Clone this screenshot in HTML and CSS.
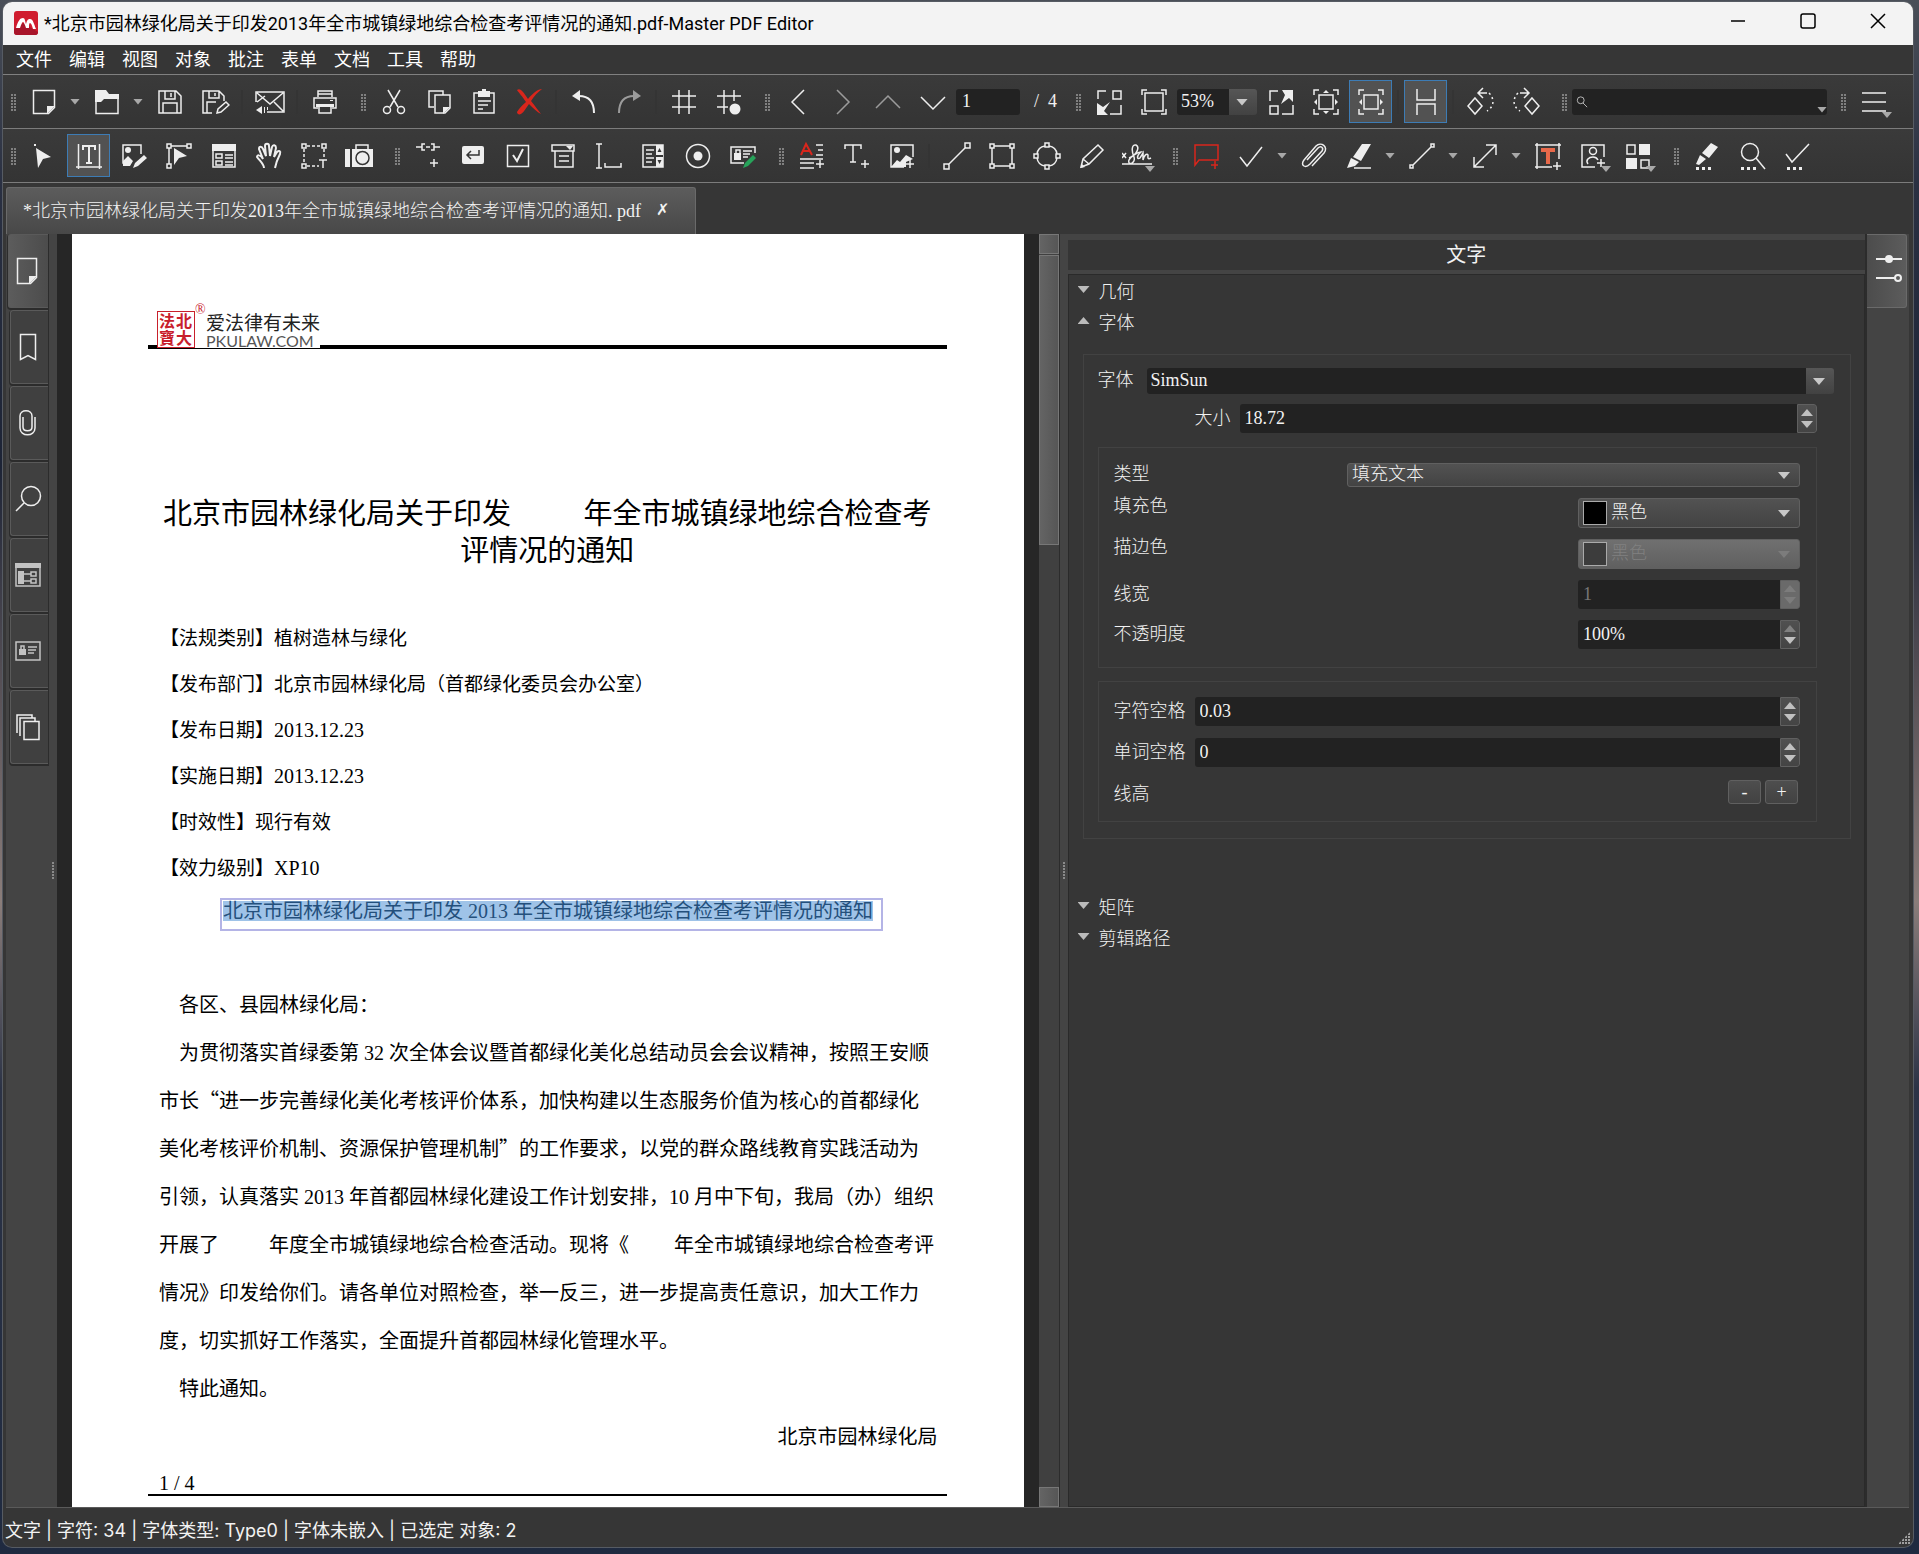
FILE: index.html
```html
<!DOCTYPE html>
<html lang="zh-CN">
<head>
  <meta charset="UTF-8" />
  <meta name="viewport" content="width=device-width, initial-scale=1.0" />
  <title>Master PDF Editor</title>
  <link rel="stylesheet" href="styles.css">
</head>
<body>
  <div class="window">
    <header class="titlebar">
      <svg class="app-logo" viewBox="0 0 24 24"><rect width="24" height="24" rx="3" fill="#d01c2e"/><path d="M0 18l9-6 15 9v1a3 3 0 0 1-3 2H3a3 3 0 0 1-3-3z" fill="#a8152a"/><path d="M2 17C4 10 6 7 9 7c2 0 2 3 3 6 1-4 2-5 4-5 3 0 4 5 6 10h-3c-1-4-2-6-3-6s-1 3-1 5h-3c-1-3-2-6-3-6s-2 3-3 6z" fill="#fff"/></svg>
      <span class="caption">*北京市园林绿化局关于印发2013年全市城镇绿地综合检查考评情况的通知.pdf-Master PDF Editor</span>
      <div class="window-buttons">
        <button aria-label="最小化"><svg viewBox="0 0 16 16"><path d="M1 8h14"/></svg></button>
        <button aria-label="最大化"><svg viewBox="0 0 16 16"><rect x="1" y="1" width="14" height="14" rx="2"/></svg></button>
        <button aria-label="关闭"><svg viewBox="0 0 16 16"><path d="M1 1l14 14M15 1L1 15"/></svg></button>
      </div>
    </header>

    <nav class="menubar">
      <a href="#">文件</a>
      <a href="#">编辑</a>
      <a href="#">视图</a>
      <a href="#">对象</a>
      <a href="#">批注</a>
      <a href="#">表单</a>
      <a href="#">文档</a>
      <a href="#">工具</a>
      <a href="#">帮助</a>
    </nav>

    <div class="toolbar">
      <span class="grip"></span>
      <button class="tool" aria-label="新建"><svg viewBox="0 0 30 30"><path d="M4.5 3.5h21v17l-6 6h-15z"/><path class="f" d="M18 27v-8h8z"/></svg></button>
      <button class="drop" aria-label="新建选项"></button>
      <button class="tool" aria-label="打开"><svg viewBox="0 0 30 30"><path d="M4 8v18.500h22V8"/><path class="f" d="M3 3h11l3 4h10v5H12l-3 3H3z"/></svg></button>
      <button class="drop" aria-label="打开选项"></button>
      <button class="tool" aria-label="保存"><svg viewBox="0 0 30 30"><path d="M4 4h17l5 5v17H4zM8 26V16h14v10M10 4v8h10V4"/><path d="M16 6v4"/></svg></button>
      <button class="tool" aria-label="另存为"><svg viewBox="0 0 30 30"><path d="M12 26H3V4h16l5 5v5M7 26V15h9M9 4v7h10V4M15 6v3"/><path d="M17 26l1-4 8-7 3 3-8 7z"/></svg></button>
      <span class="sep"></span>
      <button class="tool" aria-label="邮件"><svg viewBox="0 0 30 30"><path d="M1 15V5h28v20H12M2 6l13 11L28 6M28 24l-9-9M2 15l8-6"/><path class="f" d="M1 23l6-4v8zM9 20h1v6h-1zM12 20h1v3h-1z"/></svg></button>
      <span class="sep"></span>
      <button class="tool" aria-label="打印"><svg viewBox="0 0 30 30"><path d="M8 10V4h14v6M8 7h14M8 21H4V11h22v10h-4M9 18h12v8H9z"/><path class="f" d="M6 17h18v3H6zM20 13h3v1h-3z"/></svg></button>
      <span class="grip"></span>
      <button class="tool" aria-label="剪切"><svg viewBox="0 0 30 30"><path d="M9 3l10 17M21 3L11 20"/><circle cx="8" cy="23" r="3.500"/><circle cx="22" cy="23" r="3.500"/></svg></button>
      <button class="tool" aria-label="复制"><svg viewBox="0 0 30 30"><path d="M10 20H5V4h14v4M11 8h15v13l-5 5H11z"/><path class="f" d="M19 27v-7h7z"/></svg></button>
      <button class="tool" aria-label="粘贴"><svg viewBox="0 0 30 30"><path d="M5 6h20v20H5zM9 14h13M9 18h10M9 22h5"/><path class="f" d="M9 4h4V2h4v2h4v6H9z"/></svg></button>
      <button class="tool" aria-label="删除"><svg viewBox="0 0 30 30"><path class="red-f" d="M3 3c3-2 5 0 11 9C19 6 24 2 28 2c-4 3-8 7-11 12 4 5 7 9 10 13-4-2-8-6-12-10-3 4-5 8-8 10-2 1-4 0-4-2 2-3 5-7 9-10C8 9 5 6 3 3z"/></svg></button>
      <span class="sep"></span>
      <button class="tool" aria-label="撤销"><svg viewBox="0 0 30 30"><path class="w2" d="M10 9c10 0 15 6 15 17"/><path class="f" d="M3 9l8-6v11z"/></svg></button>
      <button class="tool off" aria-label="重做"><svg viewBox="0 0 30 30"><path class="w2" d="M20 9C10 9 5 15 5 26"/><path class="f" d="M27 9l-8-6v11z"/></svg></button>
      <span class="sep"></span>
      <button class="tool" aria-label="网格"><svg viewBox="0 0 30 30"><path d="M10 3v24M20 3v24M3 9h24M3 20h24"/></svg></button>
      <button class="tool" aria-label="对齐网格"><svg viewBox="0 0 30 30"><path d="M10 3v24M20 3v11M3 9h24M3 20h11"/><circle class="f" cx="21" cy="22" r="5.500"/></svg></button>
      <span class="grip"></span>
      <button class="tool" aria-label="第一页"><svg viewBox="0 0 30 30"><path d="M21 3L9 15l12 12"/></svg></button>
      <button class="tool off" aria-label="最后一页"><svg viewBox="0 0 30 30"><path d="M9 3l12 12L9 27"/></svg></button>
      <button class="tool off" aria-label="上一页"><svg viewBox="0 0 30 30"><path d="M3 21L15 9l12 12"/></svg></button>
      <button class="tool" aria-label="下一页"><svg viewBox="0 0 30 30"><path d="M3 10l12 12 12-12"/></svg></button>
      <input class="page-number" type="text" value="1" aria-label="页码">
      <span class="page-total">/&nbsp; 4</span>
      <span class="grip"></span>
      <button class="tool" aria-label="缩小"><svg viewBox="0 0 30 30"><path d="M4 12V4h8M19 4h8v8h-8zM16 27h11v-9"/><path class="f" d="M3 16v12h11l-4-4 6-9-7 5z"/></svg></button>
      <button class="tool" aria-label="实际大小"><svg viewBox="0 0 30 30"><path d="M6 6h18v18H6zM3 8V3h5M22 3h5v5M27 22v5h-5M8 27H3v-5"/></svg></button>
      <span class="combo zoom-combo">
        <select aria-label="缩放"><option>53%</option></select>
      </span>
      <button class="tool" aria-label="放大"><svg viewBox="0 0 30 30"><path d="M12 4H4v10M4 19h8v8H4zM16 27h11V18"/><path class="f" d="M16 3h11v12l-4-4-8 6 4-9z"/></svg></button>
      <button class="tool" aria-label="适合页面"><svg viewBox="0 0 30 30"><path d="M8 8h14v14H8zM3 8V3h5M22 3h5v5M27 22v5h-5M8 27H3v-5"/><path class="f" d="M15 3l3 3h-6zM15 27l3-3h-6zM3 15l3-3v6zM27 15l-3-3v6z"/></svg></button>
      <button class="tool on" aria-label="适合宽度"><svg viewBox="0 0 30 30"><path d="M8 8h14v14H8zM3 8V3h5M22 3h5v5M27 22v5h-5M8 27H3v-5"/><path class="f" d="M3 15l3-3v6zM27 15l-3-3v6z"/></svg></button>
      <span class="sep"></span>
      <button class="tool on" aria-label="连续页面"><svg viewBox="0 0 30 30"><path d="M6 2v11h18V2M6 28V17h18v11"/></svg></button>
      <span class="sep"></span>
      <button class="tool" aria-label="向左旋转"><svg viewBox="0 0 30 30"><path d="M9 11l7 8-7 8-7-8zM12 6h9M17 1l-5 5 5 5"/><path class="dots" d="M23 6c6 6 5 14-2 18"/></svg></button>
      <button class="tool" aria-label="向右旋转"><svg viewBox="0 0 30 30"><path d="M21 11l7 8-7 8-7-8zM18 6H9M13 1l5 5-5 5"/><path class="dots" d="M7 6c-6 6-5 14 2 18"/></svg></button>
      <span class="grip"></span>
      <label class="search">
        <svg viewBox="0 0 14 14"><circle cx="5.500" cy="5" r="4"/><path d="M8 8l5 5"/></svg>
        <input type="text" aria-label="搜索">
      </label>
      <span class="grip"></span>
      <button class="tool more" aria-label="工具栏菜单"><svg viewBox="0 0 30 30"><path d="M3 6h24M3 15h24M3 24h24"/></svg></button>
    </div>

    <div class="toolbar">
      <span class="grip"></span>
      <button class="tool" aria-label="选择"><svg viewBox="0 0 30 30"><path class="f" d="M7 7l15 9-8 2-5 9zM5 3h2v2H5z"/></svg></button>
      <button class="tool on" aria-label="编辑文字"><svg viewBox="0 0 30 30"><path d="M4.500 3v25M25.500 3v25M2 26h26"/><path class="f" d="M8 4h14v5h-2V6h-4v15h2v2h-6v-2h2V6h-4v3H8z"/></svg></button>
      <button class="tool" aria-label="编辑图像"><svg viewBox="0 0 30 30"><path d="M10 22H4V4h18v9"/><circle class="f" cx="9" cy="9" r="3"/><path class="f" d="M4 20l5-5 5 5-3 5H4zM14 27l2-5 9-8 3 3-9 8z"/></svg></button>
      <button class="tool" aria-label="编辑路径"><svg viewBox="0 0 30 30"><path d="M5 7v16M7 5h16M3 3h4v4H3zM23 3h4v4h-4zM3 23h4v4H3z"/><path class="f" d="M10 7l13 8-8 2-5 7z"/></svg></button>
      <button class="tool" aria-label="编辑表单"><svg viewBox="0 0 30 30"><path d="M4 4h22v22H4zM7 13h6v4H7zM7 20h6v4H7zM16 14h8M16 17h8M16 21h8M16 24h8"/><path class="f" d="M3 3h24v7H3z"/></svg></button>
      <button class="tool" aria-label="手形工具"><svg viewBox="0 0 30 30"><path class="w2" d="M10 27c0-4-4-7-7-11 0-2 3-3 6 2L5 8c0-3 3-3 4 0l3 7-1-10c0-3 4-3 4 0l1 10 2-9c1-3 4-2 4 1l-2 9 3-5c2-2 4-1 3 2-2 4-4 9-5 14"/></svg></button>
      <button class="tool" aria-label="选择文本"><svg viewBox="0 0 30 30"><path d="M3 3h4v4H3zM23 3h4v4h-4zM3 23h4v4H3zM20 19h8M24 19v8"/><path stroke-dasharray="3 2" d="M8 5h14M5 8v14M25 8v9M8 25h12"/></svg></button>
      <button class="tool" aria-label="快照"><svg viewBox="0 0 30 30"><path d="M12 8V4h12v4"/><path class="f" d="M1 8h5v18H1zM8 8h21v18H8z"/><circle cx="18.500" cy="17" r="6.500" fill="#eee" stroke="#353535"/></svg></button>
      <span class="grip"></span>
      <button class="tool" aria-label="链接"><svg viewBox="0 0 30 30"><path d="M3 6h6M21 6h6M12 3H9v6h3M18 3h3v6h-3M13 6h4M17 22h8M21 18v8"/></svg></button>
      <button class="tool" aria-label="按钮"><svg viewBox="0 0 30 30"><rect class="f" x="4" y="5" width="22" height="18" rx="2"/><path stroke="#353535" d="M21 9v5H9M13 10l-4 4 4 4"/></svg></button>
      <button class="tool" aria-label="复选框"><svg viewBox="0 0 30 30"><path d="M4.500 4.500h21v21h-21z"/><path class="w2" d="M10 14l4 6 6-12"/></svg></button>
      <button class="tool" aria-label="组合框"><svg viewBox="0 0 30 30"><path d="M4 4h22v6H4zM7 10v16h18V10M11 15h10M11 20h10"/><path class="f" d="M18 5h7l-3 4z"/></svg></button>
      <button class="tool" aria-label="文本框"><svg viewBox="0 0 30 30"><path d="M3 3h6M6 3v24M3 27h6M12 22v4h16v-4"/></svg></button>
      <button class="tool" aria-label="列表框"><svg viewBox="0 0 30 30"><path d="M5 4h20v22H5zM8 9h8M8 13h6M8 17h8M8 21h6"/><path class="f" d="M18 4h7v22h-7z"/><path fill="#353535" stroke="none" d="M21.500 7l2 4h-4zM21.500 23l2-4h-4zM18 14h7v2h-7z"/></svg></button>
      <button class="tool" aria-label="单选按钮"><svg viewBox="0 0 30 30"><circle cx="15" cy="15" r="11.500"/><circle class="f" cx="15" cy="15" r="4.500"/></svg></button>
      <button class="tool" aria-label="签名"><svg viewBox="0 0 30 30"><path d="M16 22H3V6h24v6M15 10h9M15 13h7M15 16h5"/><path class="f" d="M6 12h7v7H6z"/><path d="M8 12V9h4v3"/><path class="green-f" d="M15 27l2-5 8-8 3 3-8 8z"/></svg></button>
      <span class="grip"></span>
      <button class="tool" aria-label="文字格式"><svg viewBox="0 0 30 30"><path class="red w2" d="M4 14L9 3l6 11M6 10h7"/><path d="M19 4h7M21 9h5M19 14h7M3 18h23M3 22h14M3 27h14M19 23h8M23 19v8"/></svg></button>
      <button class="tool" aria-label="插入文字"><svg viewBox="0 0 30 30"><path d="M3 8V4h16v4M11 4v17M8 21h6M19 23h8M23 19v8"/></svg></button>
      <button class="tool" aria-label="插入图像"><svg viewBox="0 0 30 30"><path d="M17 26H4V4h22v12M19 23h8M23 19v8"/><circle class="f" cx="10" cy="9" r="3"/><path class="f" d="M4 26l6-7 3 2 6-7 7 4-7 3v5z"/></svg></button>
      <span class="sep"></span>
      <button class="tool" aria-label="直线"><svg viewBox="0 0 30 30"><path d="M6 24L24 6M2 23h5v5H2zM23 2h5v5h-5z"/></svg></button>
      <button class="tool" aria-label="矩形"><svg viewBox="0 0 30 30"><path d="M7 5h16M7 25h16M5 7v16M25 7v16M3 3h4v4H3zM23 3h4v4h-4zM3 23h4v4H3zM23 23h4v4h-4z"/></svg></button>
      <button class="tool" aria-label="椭圆"><svg viewBox="0 0 30 30"><path d="M13 2h4v4h-4zM13 24h4v4h-4zM2 13h4v4H2zM24 13h4v4h-4zM17 5q7 1 8 8M25 17q-1 7-8 8M13 25q-7-1-8-8M5 13q1-7 8-8"/></svg></button>
      <button class="tool" aria-label="铅笔"><svg viewBox="0 0 30 30"><path d="M4 26l2-8L21 4l5 5-14 14zM6 18l6 5"/><path class="f" d="M4 27l1-4 3 3z"/></svg></button>
      <button class="tool more" aria-label="手写签名"><svg viewBox="0 0 30 30"><path d="M0 12l4 5M4 12l-4 5M7 17c8-3 11-11 7-13-4-1-5 5-2 12 2 7-7 9-5 3 2-4 9-8 12-8-5 4-4 8-1 6l3-5v7c1-5 4-7 5-5 0 2-1 5 3 3M0 23h30"/></svg></button>
      <span class="grip"></span>
      <button class="tool" aria-label="注释"><svg viewBox="0 0 30 30"><path class="red" d="M4 4h23v15H8l-4 5zM20 24h7M24 20v8"/></svg></button>
      <button class="tool" aria-label="勾选"><svg viewBox="0 0 30 30"><path d="M4 16l7 9L26 6"/></svg></button>
      <button class="drop" aria-label="勾选选项"></button>
      <button class="tool" aria-label="附件"><svg viewBox="0 0 30 30"><path d="M8 19L19 7c3-3 6 0 4 3L11 23c-5 5-10 1-6-4L17 5c5-5 13 1 8 7L13 25"/></svg></button>
      <button class="tool" aria-label="高亮"><svg viewBox="0 0 30 30"><path class="f" d="M9 16L18 3h9L17 20zM7 17l8 4-4 4-8 2z"/><path d="M10 27h17"/></svg></button>
      <button class="drop" aria-label="高亮选项"></button>
      <button class="tool" aria-label="线条批注"><svg viewBox="0 0 30 30"><path d="M6 24L24 6M3 24h3v3H3zM24 3h3v3h-3z"/></svg></button>
      <button class="drop" aria-label="线条选项"></button>
      <button class="tool" aria-label="箭头"><svg viewBox="0 0 30 30"><path d="M4 26L26 4M16 4h10v10M4 16v10h10"/></svg></button>
      <button class="drop" aria-label="箭头选项"></button>
      <button class="tool" aria-label="文本批注"><svg viewBox="0 0 30 30"><path d="M2 4h26M4 2v26M26 2v16M2 26h17M20 25h8M24 21v8"/><path class="orange-f" d="M8 7h14v4h-5v12h-4V11H8z"/></svg></button>
      <button class="tool more" aria-label="图章"><svg viewBox="0 0 30 30"><path d="M17 26H4V4h22v12M19 22h8M23 18v8"/><circle cx="15" cy="10" r="3.500"/><path d="M10 23c-3-4 1-7 5-7 3 0 4 1 5 3"/></svg></button>
      <button class="tool more" aria-label="初始视图"><svg viewBox="0 0 30 30"><path d="M4 4h8v9H4zM18 19h8v8h-8z"/><path class="f" d="M16 3h11v11H16zM3 17h11v11H3z"/></svg></button>
      <span class="grip"></span>
      <button class="tool" aria-label="编辑标记"><svg viewBox="0 0 30 30"><path class="f" d="M10 12l9-10 7 4-9 11zM8 14l6 4-7 6-3-1zM4 26h3v3H4zM10 26h3v3h-3zM16 26h3v3h-3z"/></svg></button>
      <button class="tool" aria-label="查找标记"><svg viewBox="0 0 30 30"><circle cx="13" cy="11" r="8.500"/><path d="M19 17l9 11"/><path class="f" d="M4 26h3v3H4zM10 26h3v3h-3zM16 26h3v3h-3z"/></svg></button>
      <button class="tool" aria-label="应用标记"><svg viewBox="0 0 30 30"><path d="M4 13l6 8L27 3"/><path class="f" d="M5 26h3v3H5zM11 26h3v3h-3zM17 26h3v3h-3z"/></svg></button>
    </div>

    <div class="doc-tabs">
      <div class="doc-tab">
        <span>*北京市园林绿化局关于印发2013年全市城镇绿地综合检查考评情况的通知. pdf</span>
        <button aria-label="关闭标签">✗</button>
      </div>
    </div>

    <main class="workspace">
      <div class="dock">
        <button class="dock-tab current" aria-label="页面"><svg viewBox="0 0 30 30"><path d="M5.500 2.500h19v19l-6 6h-13z"/><path class="f" d="M17 28v-8h8z"/></svg></button>
        <button class="dock-tab" aria-label="书签"><svg viewBox="0 0 30 30"><path d="M7.500 2.500h15v25l-7.500-4-7.500 4z"/></svg></button>
        <button class="dock-tab" aria-label="附件"><svg viewBox="0 0 30 30"><path d="M10 9v10c0 5 9 5 9 0V8c0-7-12-7-12 0v12c0 9 15 9 15 0V9"/></svg></button>
        <button class="dock-tab" aria-label="搜索"><svg viewBox="0 0 30 30"><circle cx="18" cy="12" r="9.500"/><path d="M11 19l-8 8"/></svg></button>
        <button class="dock-tab dim" aria-label="对象树"><svg viewBox="0 0 30 30"><path d="M3 4h24v22H3z"/><path class="f" d="M2 3h26v5H2zM5 11h6v13H5z"/><path d="M11 14h7M11 21h7M18 12h5v4h-5zM18 19h5v4h-5z"/></svg></button>
        <button class="dock-tab dim" aria-label="签名"><svg viewBox="0 0 30 30"><path d="M3 6h24v18H3zM15 11h9M15 14h8M15 17h6"/><path class="f" d="M6 13h7v6H6z"/><path d="M8 13v-3h3v3"/></svg></button>
        <button class="dock-tab" aria-label="图层"><svg viewBox="0 0 30 30"><path d="M11 9.500h15v18H11zM7 24V6h15v3M4 21V3h15v3"/></svg></button>
      </div>
      <div class="splitter"></div>

      <div class="viewer">
        <article class="sheet">
          <header class="sheet-head">
            <div class="pku-logo">
              <div class="seal"><span>法</span><span>北</span><span>寶</span><span>大</span></div>
              <sup>®</sup>
              <div class="pku-name"><b>爱法律有未来</b><span>PKULAW.COM</span></div>
            </div>
          </header>
          <h1>北京市园林绿化局关于印发<span class="blank"></span>年全市城镇绿地综合检查考<br>评情况的通知</h1>
          <div class="meta">
            <p>【法规类别】植树造林与绿化</p>
            <p>【发布部门】北京市园林绿化局（首都绿化委员会办公室）</p>
            <p>【发布日期】<span class="code">2013.12.23</span></p>
            <p>【实施日期】<span class="code">2013.12.23</span></p>
            <p>【时效性】现行有效</p>
            <p>【效力级别】<span class="code">XP10</span></p>
          </div>
          <h2><mark>北京市园林绿化局关于印发 2013 年全市城镇绿地综合检查考评情况的通知</mark></h2>
          <div class="letter">
            <p class="indent">各区、县园林绿化局：</p>
            <p class="indent">为贯彻落实首绿委第 32 次全体会议暨首都绿化美化总结动员会会议精神，按照王安顺</p>
            <p>市长<span class="quote">“</span>进一步完善绿化美化考核评价体系，加快构建以生态服务价值为核心的首都绿化</p>
            <p>美化考核评价机制、资源保护管理机制<span class="quote">”</span>的工作要求，以党的群众路线教育实践活动为</p>
            <p>引领，认真落实 2013 年首都园林绿化建设工作计划安排，10 月中下旬，我局（办）组织</p>
            <p>开展了<span class="blank"></span>年度全市城镇绿地综合检查活动。现将《<span class="blank short"></span>年全市城镇绿地综合检查考评</p>
            <p>情况》印发给你们。请各单位对照检查，举一反三，进一步提高责任意识，加大工作力</p>
            <p>度，切实抓好工作落实，全面提升首都园林绿化管理水平。</p>
            <p class="indent">特此通知。</p>
            <p class="signed">北京市园林绿化局</p>
          </div>
          <footer class="sheet-foot">1 / 4</footer>
        </article>
      </div>
      <div class="scrollbar"><i class="cap"></i><i class="thumb"></i><i class="cap end"></i></div>
      <div class="splitter"></div>

      <aside class="inspector">
        <h3>文字</h3>
        <div class="inspector-body">
          <button class="section">几何</button>
          <button class="section open">字体</button>
          <div class="group">
            <div class="row font-row">
              <label for="font">字体</label>
              <span class="combo edit"><select id="font"><option>SimSun</option></select></span>
            </div>
            <div class="row size-row">
              <label for="size">大小</label>
              <span class="spin"><input id="size" type="text" value="18.72"><span class="steps"><button aria-label="增加"></button><button aria-label="减少"></button></span></span>
            </div>

            <div class="group inner fill-group">
              <div class="row">
                <label for="kind">类型</label>
                <span class="combo flat wide"><select id="kind"><option>填充文本</option></select></span>
              </div>
              <div class="row top">
                <label for="fill">填充色</label>
                <span class="combo flat color"><i class="swatch"></i><select id="fill"><option>黑色</option></select></span>
              </div>
              <div class="row top">
                <label for="stroke">描边色</label>
                <span class="combo flat color disabled"><i class="swatch"></i><select id="stroke" disabled><option>黑色</option></select></span>
              </div>
              <div class="row">
                <label for="lineWidth">线宽</label>
                <span class="spin narrow disabled"><input id="lineWidth" type="text" value="1" disabled><span class="steps"><button aria-label="增加" disabled></button><button aria-label="减少" disabled></button></span></span>
              </div>
              <div class="row">
                <label for="opacity">不透明度</label>
                <span class="spin narrow"><input id="opacity" type="text" value="100%"><span class="steps"><button aria-label="增加" disabled></button><button aria-label="减少"></button></span></span>
              </div>
            </div>

            <div class="group inner space-group">
              <div class="row">
                <label for="charSpace">字符空格</label>
                <span class="spin"><input id="charSpace" type="text" value="0.03"><span class="steps"><button aria-label="增加"></button><button aria-label="减少"></button></span></span>
              </div>
              <div class="row">
                <label for="wordSpace">单词空格</label>
                <span class="spin"><input id="wordSpace" type="text" value="0"><span class="steps"><button aria-label="增加"></button><button aria-label="减少"></button></span></span>
              </div>
              <div class="row">
                <span>线高</span>
                <span class="pair"><button>-</button><button>+</button></span>
              </div>
            </div>
          </div>
          <button class="section after">矩阵</button>
          <button class="section">剪辑路径</button>
        </div>
      </aside>

      <div class="side-tabs">
        <button aria-label="属性"><svg viewBox="0 0 30 30"><path class="w2" d="M2 5h26M2 24h20"/><circle class="f" cx="15" cy="5" r="4"/><circle class="w2" cx="24" cy="24" r="3"/></svg></button>
      </div>
    </main>

    <footer class="statusbar">
      <span>文字 | 字符: 34 | 字体类型: Type0 | 字体未嵌入 | 已选定 对象: 2</span>
      <i class="size-grip"></i>
    </footer>
  </div>
</body>
</html>
```
FILE: styles.css
```css
* {
  box-sizing: border-box;
}

body {
  margin: 0;
  min-height: 100vh;
  display: flex;
  padding: 2px 6px 7px 3px;
  background: linear-gradient(#4a4f58, #2a3042 12%, #1d2436 30%, #5a5358 45%, #8a7d7a 58%, #2c3346 70%, #1f2a40);
  font-family: Roboto, "Noto Sans CJK SC", sans-serif;
  font-size: 18px;
  color: #f2f2f2;
}

h1, h2, h3, p {
  margin: 0;
  font-weight: normal;
}

button, input, select {
  font: inherit;
  color: inherit;
  margin: 0;
  padding: 0;
  border: 0;
  background: none;
}

.window {
  flex: 1;
  min-width: 0;
  display: flex;
  flex-direction: column;
  background: #363636;
  border-radius: 9px;
  box-shadow: 0 0 0 1px #565b63;
  overflow: hidden;
}

/* title bar */
.titlebar {
  display: flex;
  align-items: center;
  height: 43px;
  padding: 0 0 2px 11px;
  background: #f3f3f3;
  color: #000;
}

.app-logo {
  width: 24px;
  height: 24px;
  margin-right: 6px;
}

.caption {
  flex: 1;
  padding-bottom: 2px;
  white-space: nowrap;
}

.window-buttons {
  display: flex;
}

.window-buttons button {
  width: 70px;
  height: 40px;
}

.window-buttons svg {
  width: 16px;
  height: 16px;
  fill: none;
  stroke: #000;
  stroke-width: 1.5;
}

/* menu */
.menubar {
  display: flex;
  gap: 17px;
  height: 30px;
  padding-left: 13px;
  line-height: 29px;
  border-bottom: 1px solid #808080;
}

.menubar a {
  color: #fff;
  text-decoration: none;
}

/* toolbars */
.toolbar {
  display: flex;
  align-items: center;
  height: 54px;
  padding-right: 17px;
  border-bottom: 1px solid #7c7c7c;
  background: linear-gradient(#3a3a3a, #343434);
}

.grip {
  flex: none;
  width: 6px;
  height: 18px;
  margin: 0 5px 0 13px;
  background:
    linear-gradient(#383838 1px, transparent 1px) 0 0 / 3px 3px,
    linear-gradient(90deg, #383838 1px, #808080 1px) 0 0 / 3px 3px;
}

.grip:first-child {
  margin-left: 7px;
}

.sep {
  flex: none;
  width: 2px;
  height: 24px;
  margin: 0 4px;
  background: #343434;
}

.tool {
  flex: none;
  position: relative;
  width: 43px;
  height: 43px;
  margin: 0 1px;
  border: 1px solid transparent;
}

.tool.on {
  background: #525252;
  border-color: #3d7cb5;
}

.tool svg,
.dock-tab svg,
.side-tabs svg {
  display: block;
  width: 30px;
  height: 30px;
  margin: auto;
  fill: none;
  stroke: #eee;
  stroke-width: 1.5;
}

svg .f {
  fill: #eee;
  stroke: none;
}

svg .w2 {
  stroke-width: 2;
}

svg .dots {
  stroke-dasharray: 2 3;
}

svg .red {
  stroke: #d9261c;
}

svg .red-f {
  fill: #d9261c;
  stroke: none;
}

svg .green-f {
  fill: #27a35a;
  stroke: none;
}

svg .orange-f {
  fill: #e8694a;
  stroke: none;
}

.tool.off svg {
  opacity: 0.55;
}

.drop {
  flex: none;
  width: 18px;
  height: 43px;
}

.drop::before,
.more::after,
.search::after {
  content: "";
  display: block;
  margin: auto;
  width: 10px;
  height: 6px;
  background: #a8a8a8;
  clip-path: polygon(0 0, 100% 0, 50% 100%);
}

.more::after {
  position: absolute;
  right: 2px;
  bottom: 4px;
}

.page-number {
  width: 64px;
  height: 26px;
  padding-left: 6px;
  margin-left: 1px;
  background: #222;
  border-radius: 3px;
  font-family: "Liberation Serif", serif;
}

.page-total {
  width: 42px;
  padding-left: 14px;
  white-space: nowrap;
  font-family: "Liberation Serif", serif;
}

.search {
  flex: 1;
  display: flex;
  align-items: center;
  height: 26px;
  background: #222;
  border-radius: 3px;
  padding-left: 4px;
}

.search svg {
  width: 12px;
  height: 12px;
  fill: none;
  stroke: #ccc;
}

.search input {
  flex: 1;
  min-width: 0;
  height: 26px;
}

.search::after {
  margin: 16px 0 0;
}

/* combo boxes */
.combo {
  position: relative;
  display: flex;
  align-items: center;
  background: #222;
  border-radius: 3px;
}

.combo select {
  flex: 1;
  min-width: 0;
  height: 100%;
  appearance: none;
  padding: 0 0 2px 4px;
}

.combo::after {
  content: "";
  position: absolute;
  right: 9px;
  top: calc(50% - 3px);
  width: 12px;
  height: 7px;
  background: #c8c8c8;
  clip-path: polygon(0 0, 100% 0, 50% 100%);
  pointer-events: none;
}

.zoom-combo {
  flex: none;
  width: 80px;
  height: 26px;
  margin: 0 1px;
  font-family: "Liberation Serif", serif;
}

.zoom-combo,
.combo.edit {
  background: linear-gradient(#565656, #424242) right / 28px 100% no-repeat #222;
}

/* document tab */
.doc-tabs {
  display: flex;
  height: 51px;
  padding: 4px 0 0 3px;
}

.doc-tab {
  display: flex;
  align-items: center;
  padding: 0 23px 4px 16px;
  gap: 11px;
  background: linear-gradient(#5c5c5c, #484848);
  border: 1px solid #6a6a6a;
  border-bottom: 0;
  border-radius: 3px 3px 0 0;
  font-family: "Liberation Serif", "Noto Sans CJK SC", serif;
  font-weight: 300;
  white-space: nowrap;
}

.doc-tab button {
  width: 20px;
  font-size: 16px;
}

/* workspace */
.workspace {
  flex: 1;
  display: grid;
  grid-template-columns: 42px 9px minmax(0, 16fr) 21px 8px minmax(0, 13fr) 44px;
  margin: 0 4px 0 3px;
  background: #444;
  border-bottom: 1px solid #5a5a5a;
}

.dock-tab {
  display: block;
  width: 38px;
  height: 74px;
  margin: 0 0 2px 4px;
  padding-right: 3px;
  background: #404040;
  border: 1px solid #5a5a5a;
  border-right: 0;
  border-radius: 3px 0 0 3px;
  box-shadow: 0 1px 0 1px #2c2c2c;
}

.dock-tab.current {
  width: 40px;
  margin-left: 2px;
  background: linear-gradient(90deg, #5c5c5c, #4c4c4c);
}

.dock-tab.dim svg {
  opacity: 0.75;
}

.splitter {
  display: flex;
  align-items: center;
  justify-content: center;
}

.splitter::before {
  content: "";
  width: 2px;
  height: 18px;
  background: repeating-linear-gradient(#8a8a8a 0 2px, transparent 2px 3px);
}

.viewer {
  background: #262626;
  padding: 0 15px;
}

.scrollbar {
  display: flex;
  flex-direction: column;
  background: #404040;
  border-right: 1px solid #2c2c2c;
}

.scrollbar i {
  background: linear-gradient(90deg, #646464, #565656);
  border: 1px solid #777;
}

.scrollbar .cap {
  height: 20px;
  margin-bottom: 1px;
}

.scrollbar .thumb {
  height: 290px;
}

.scrollbar .end {
  margin: auto 0 0;
}

/* pdf page */
.sheet {
  min-height: 100%;
  padding: 71px 77px 8px 76px;
  background: #fff;
  color: #000;
  font-family: "Liberation Serif", "Noto Sans CJK SC", serif;
  font-size: 20px;
  font-weight: 300;
  white-space: nowrap;
  text-spacing-trim: space-all;
}

.sheet-head {
  display: flex;
  height: 44px;
  border-bottom: 4px solid #000;
}

.pku-logo {
  display: flex;
  align-items: flex-end;
  height: 43px;
  margin-left: 9px;
  background: #fff;
}

.seal {
  display: grid;
  grid-template-columns: 17px 17px;
  width: 38px;
  height: 37px;
  padding: 1px;
  border: 1px solid #c8202c;
  color: #c8202c;
  font-size: 16px;
  line-height: 17px;
  font-weight: 700;
}

.pku-logo sup {
  align-self: flex-start;
  width: 11px;
  font-size: 14px;
  line-height: 10px;
  color: #c8202c;
}

.pku-name {
  display: flex;
  flex-direction: column;
  color: #555;
}

.pku-name b {
  font-size: 19px;
  line-height: 18px;
  color: #222;
}

.pku-name span {
  font-family: Lato, sans-serif;
  font-size: 16px;
  line-height: 15px;
  font-weight: normal;
}

.sheet h1 {
  margin-top: 147px;
  font-size: 29px;
  line-height: 37px;
  text-align: center;
}

.blank {
  display: inline-block;
  width: 2.5em;
}

.blank.short {
  width: 45px;
}

.meta {
  margin: 46px 11px 0 12px;
  font-size: 19px;
  line-height: 46px;
}

.code {
  font-size: 20px;
  line-height: 20px;
}

.sheet h2 {
  width: fit-content;
  margin: 6px 0 0 72px;
  padding: 1px 8px 8px 1px;
  border: 2px solid #b4b4e6;
  font-size: 20px;
  line-height: 20px;
}

.sheet mark {
  display: block;
  background: #9fc3e8;
  color: #24507c;
}

.letter {
  margin: 50px 9px 0 11px;
  line-height: 48px;
}

.indent {
  padding-left: 20px;
}

.quote {
  font-family: "Noto Sans CJK SC", sans-serif;
  line-height: 20px;
}

.signed {
  text-align: right;
}

.sheet-foot {
  margin-top: 12px;
  padding-left: 11px;
  line-height: 21px;
  border-bottom: 2px solid #000;
}

/* inspector */
.inspector {
  display: flex;
  flex-direction: column;
  padding-top: 6px;
  font-family: "Liberation Serif", "Noto Sans CJK SC", serif;
  font-weight: 300;
}

.inspector h3 {
  height: 30px;
  line-height: 30px;
  margin-bottom: 4px;
  background: #353535;
  font-size: 20px;
  text-align: center;
}

.inspector-body {
  flex: 1;
  padding: 0 13px 0 14px;
  background: #363636;
  border: 1px solid #2a2a2a;
}

.section {
  display: flex;
  align-items: center;
  gap: 9px;
  height: 31px;
  margin-left: -5px;
  padding-bottom: 2px;
}

.section::before {
  content: "";
  width: 12px;
  height: 7px;
  background: #bbb;
  clip-path: polygon(0 0, 100% 0, 50% 100%);
}

.section.open::before {
  clip-path: polygon(50% 0, 100% 100%, 0 100%);
}

.section.after {
  margin-top: 52px;
}

.group {
  margin-top: 17px;
  padding: 13px 16px 16px 14px;
  border: 1px solid #424242;
}

.group .row {
  display: flex;
  align-items: center;
  justify-content: space-between;
}

.group label {
  line-height: 22px;
  padding-bottom: 2px;
}

.group .row.top {
  align-items: flex-start;
}

.group .row.top label {
  line-height: 16px;
}

.combo.edit {
  flex: 1;
  height: 26px;
  margin-left: 13px;
}

.size-row {
  margin: 10px 17px 0 97px;
}

.spin {
  flex: 1;
  display: flex;
  height: 29px;
  margin-left: 9px;
  background: #222;
  border-radius: 3px;
}

.spin.narrow,
.combo.color {
  flex: none;
  width: 222px;
}

.spin input {
  flex: 1;
  min-width: 0;
  padding-left: 5px;
}

.steps {
  display: flex;
  flex-direction: column;
  justify-content: center;
  gap: 5px;
  width: 20px;
  border: 1px solid #606060;
  border-radius: 0 3px 3px 0;
  background: linear-gradient(#505050, #444);
}

.steps button {
  width: 12px;
  height: 7px;
  margin: 0 auto;
  background: #c0c0c0;
  clip-path: polygon(50% 0, 100% 100%, 0 100%);
}

.steps button:last-child {
  clip-path: polygon(0 0, 100% 0, 50% 100%);
}

.steps button:disabled {
  background: #808080;
}

.group.inner {
  margin: 14px 17px 0 0;
  padding: 15px 16px 18px 15px;
}

.fill-group .row {
  margin-bottom: 11px;
}

.fill-group .row:last-child {
  margin-bottom: 0;
}

.combo.flat {
  height: 30px;
  background: linear-gradient(#525252, #434343);
  border: 1px solid #606060;
}

.combo.flat.wide {
  width: 453px;
  height: 24px;
}

.swatch {
  width: 24px;
  height: 24px;
  margin-left: 4px;
  background: #000;
  border: 1px solid #aaa;
}

.combo.flat.disabled {
  background: linear-gradient(#707070, #606060);
  color: #808080;
}

.combo.disabled select {
  opacity: 1;
}

.combo.disabled .swatch {
  background: #3c3c3c;
}

.combo.disabled::after {
  background: #7c7c7c;
}

.spin.disabled {
  color: #777;
}

.spin.disabled .steps {
  background: #6a6a6a;
}

.spin.disabled button {
  background: #7c7c7c;
}

.group.space-group {
  margin-top: 13px;
  padding-bottom: 16px;
}

.space-group .row {
  margin-bottom: 12px;
}

.space-group .row:last-child {
  margin-bottom: 0;
}

.pair {
  display: flex;
  gap: 4px;
  padding-right: 2px;
}

.pair button {
  width: 33px;
  height: 24px;
  line-height: 18px;
  background: linear-gradient(#4e4e4e, #424242);
  border: 1px solid #606060;
  border-radius: 3px;
}

/* right edge tabs */
.side-tabs {
  border-left: 2px solid #2c2c2c;
}

.side-tabs button {
  width: 40px;
  height: 74px;
  padding: 0 0 4px 5px;
  background: linear-gradient(90deg, #4c4c4c, #5c5c5c);
  border: 1px solid #6a6a6a;
  border-left: 0;
  border-radius: 0 3px 3px 0;
}

/* status bar */
.statusbar {
  display: flex;
  justify-content: space-between;
  height: 39px;
  padding-left: 2px;
  font-family: Inter, "Noto Sans CJK SC", sans-serif;
  line-height: 46px;
  white-space: nowrap;
}

.size-grip {
  align-self: flex-end;
  width: 12px;
  height: 12px;
  margin: 0 3px 3px 0;
  background:
    linear-gradient(#383838 1px, transparent 1px) 0 0 / 3px 3px,
    linear-gradient(90deg, #383838 1px, #a0a0a0 1px) 0 0 / 3px 3px;
  clip-path: polygon(100% 0, 100% 100%, 0 100%);
}
```
